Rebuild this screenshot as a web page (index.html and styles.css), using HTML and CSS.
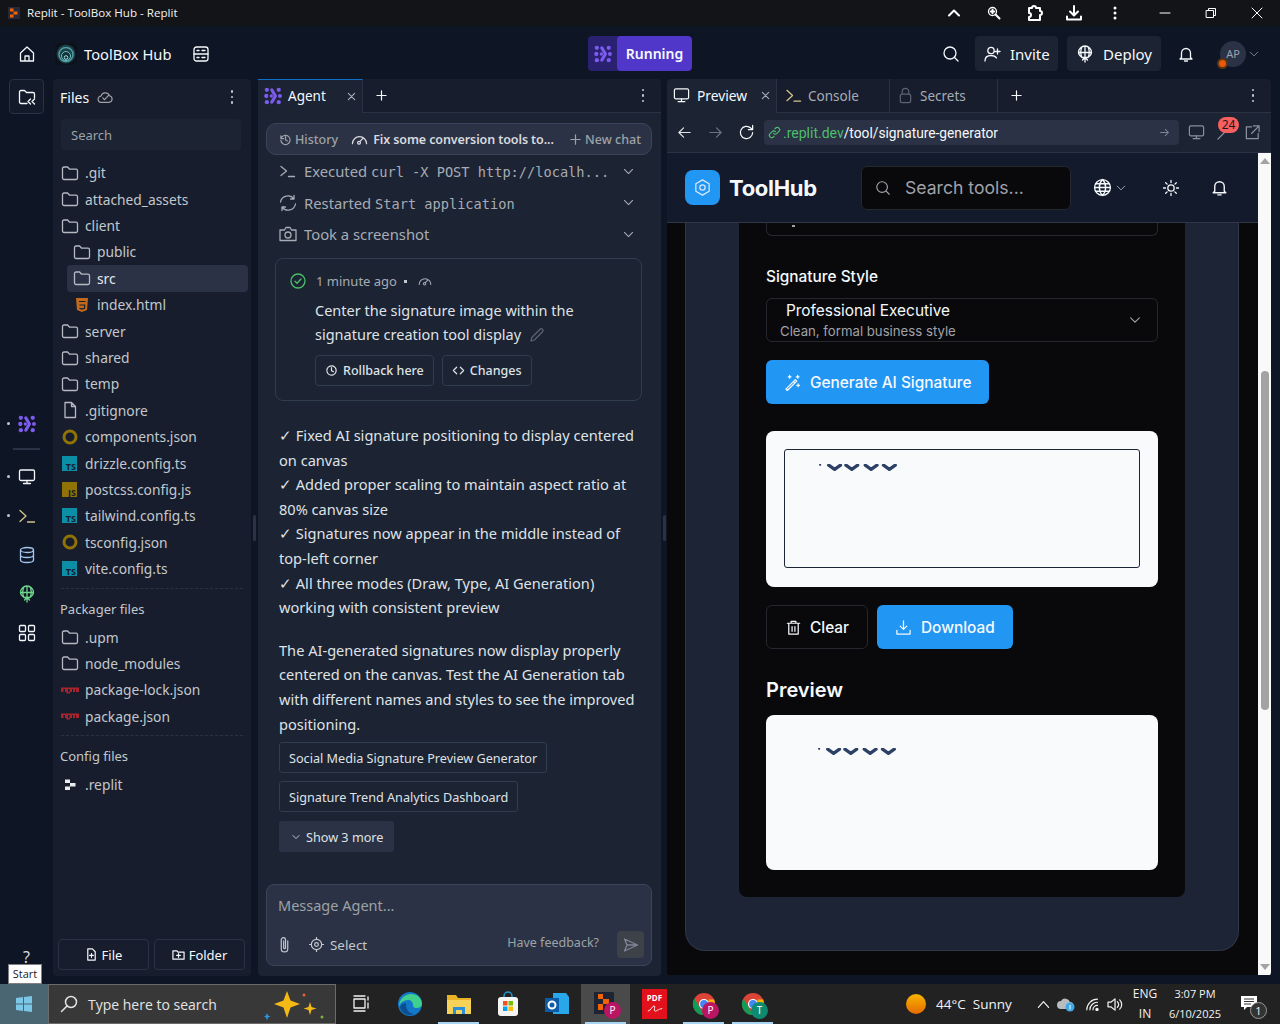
FILE: index.html
```html
<!DOCTYPE html>
<html lang="en">
<head>
    <meta charset="UTF-8">
    <meta name="viewport" content="width=device-width, initial-scale=1.0">
    <title>Replit - ToolBox Hub - Replit</title>
    <link rel="stylesheet" href="styles.css">
</head>
<body>
<svg class="sprite" width="0" height="0">
    <symbol id="i-folder" viewBox="0 0 18 18"><path d="M1.500 4.500a1.500 1.500 0 0 1 1.500-1.500h3.600l2 2.200H15a1.500 1.500 0 0 1 1.500 1.500v7.300a1.500 1.500 0 0 1-1.500 1.500H3a1.500 1.500 0 0 1-1.500-1.500z"/></symbol>
    <symbol id="i-file" viewBox="0 0 18 18"><path d="M4 1.500h6.500L14.500 5.500V16.500H4zM10.500 1.500V5.500H14.500"/></symbol>
    <symbol id="i-chevron" viewBox="0 0 16 16"><path d="M3 5.500l5 5 5-5"/></symbol>
    <symbol id="i-bell" viewBox="0 0 18 18"><path d="M4.500 12.500V8a4.500 4.500 0 0 1 9 0v4.500l1.500 1.500H3zM7.500 16h3"/></symbol>
    <symbol id="i-search" viewBox="0 0 18 18"><circle cx="8" cy="8" r="6"/><path d="M12.500 12.500L16 16"/></symbol>
    <symbol id="i-monitor" viewBox="0 0 18 18"><rect x="1.500" y="2" width="15" height="10.500" rx="1.500"/><path d="M9 12.500v3M5.500 15.500h7"/></symbol>
    <symbol id="i-shell" viewBox="0 0 18 18"><path d="M2 3.500L8 9l-6 5.500"/><path class="dim" d="M9.500 15h7"/></symbol>
    <symbol id="i-gauge" viewBox="0 0 18 18"><path d="M1.500 13.500a7.500 7.500 0 0 1 15 0M9.500 11l3-3"/><circle cx="8.500" cy="12.500" r="1.500"/></symbol>
    <symbol id="i-deploy" viewBox="0 0 18 18"><path d="M2.500 7.500a6.500 6.500 0 0 1 13 0c0 2-1.500 3.500-3.500 5H6c-2-1.500-3.500-3-3.500-5zM2.500 7.500h13M9 1v16M6.500 15L9 12.500 11.500 15M6 1.800c-1.500 3-1.500 7.500 0 10.700M12 1.800c1.500 3 1.500 7.500 0 10.700"/></symbol>
    <symbol id="i-agent" viewBox="0 0 22 22">
        <circle cx="3.500" cy="3.500" r="2.600"/><circle cx="2.800" cy="11" r="2.600"/><circle cx="3.500" cy="18.500" r="2.600"/>
        <circle cx="9" cy="11" r="2"/>
        <path fill="none" stroke="#7c5cf0" stroke-width="3.800" stroke-linecap="round" stroke-linejoin="round" d="M9.500 3.500l4.500 7.500-4.500 7.500"/>
        <circle cx="18" cy="3.500" r="2.600"/><circle cx="19.500" cy="11" r="2.400"/><circle cx="18" cy="18.500" r="2.600"/>
    </symbol>
</svg>

<header class="titlebar">
    <svg class="title-logo" viewBox="0 0 12 12"><rect width="12" height="12" fill="#26293a"/><path fill="#f26207" d="M2 1.500h3.500v3H2zM5.500 4.500h4v3h-4zM2 7.500h3.500v3H2z"/></svg>
    <span class="title-text">Replit - ToolBox Hub - Replit</span>
    <div class="title-actions">
        <svg class="ico title-ico" viewBox="0 0 16 16"><path class="thick" d="M3 10.500l5-5 5 5"/></svg>
        <svg class="ico title-ico" viewBox="0 0 16 16"><circle cx="6.500" cy="6.500" r="4"/><path class="thick" d="M9.500 9.500l4 4M4.800 6.500h3.400M6.500 4.800v3.400"/></svg>
        <svg class="ico title-ico large ext-ico" viewBox="0 0 18 18"><path class="thick" d="M3 4h3a2 2 0 0 1 4 0h4v3a2 2 0 0 1 0 4v5H3v-3a2 2 0 0 0 0-4z"/></svg>
        <svg class="ico title-ico large" viewBox="0 0 18 18"><path class="thick" d="M9 2v9M5 7.500L9 11.500l4-4M2 12.500v3h14v-3"/></svg>
        <svg class="title-ico" viewBox="0 0 16 16"><g fill="#fff"><circle cx="8" cy="3" r="1.500"/><circle cx="8" cy="8" r="1.500"/><circle cx="8" cy="13" r="1.500"/></g></svg>
        <div class="win-btns">
            <svg class="ico win-ico" viewBox="0 0 12 12"><path d="M1 6h10"/></svg>
            <svg class="ico win-ico" viewBox="0 0 12 12"><path d="M1.500 3.500h7v7h-7zM3.500 3.500v-2h7v7h-2"/></svg>
            <svg class="ico win-ico" viewBox="0 0 12 12"><path d="M1 1l10 10M11 1L1 11"/></svg>
        </div>
    </div>
</header>

<nav class="appbar">
    <div class="appbar-left">
        <svg class="ico bar-ico home" viewBox="0 0 18 18"><path d="M2.500 8L9 2l6.500 6v8h-13zM7 16v-5h4v5"/></svg>
        <span class="repl-logo"><svg viewBox="0 0 22 22"><circle cx="11" cy="11" r="9.500" fill="#1c3f47"/><circle cx="11" cy="11.500" r="7" fill="none" stroke="#4f9ea3" stroke-width="1.500"/><circle cx="11" cy="13" r="4.500" fill="#123239" stroke="#6fc0c4"/><circle cx="11" cy="14.500" r="1.800" fill="none" stroke="#a5dcdc"/></svg></span>
        <span class="repl-name">ToolBox Hub</span>
        <svg class="ico bar-ico db-small" viewBox="0 0 18 18"><rect x="2" y="2" width="14" height="14" rx="2.500"/><path d="M2 9h14M5 5.500h2M5 12.500h2M10 5.500h3M10 12.500h3"/></svg>
    </div>
    <div class="run-group">
        <span class="run-logo"><svg class="agent-svg" width="18" height="18"><use href="#i-agent"/></svg></span>
        <span class="run-btn">Running</span>
    </div>
    <div class="appbar-right">
        <svg class="ico bar-ico" viewBox="0 0 18 18"><use href="#i-search"/></svg>
        <span class="bar-btn invite"><svg class="ico bar-ico" viewBox="0 0 18 18"><circle cx="7" cy="5.500" r="3.200"/><path d="M1 16c0-4 2.500-5.500 6-5.500s4.500 1 5.500 2.500M13.500 4v5M11 6.500h5"/></svg>Invite</span>
        <span class="bar-btn deploy"><svg class="ico bar-ico" viewBox="0 0 18 18"><use href="#i-deploy"/></svg>Deploy</span>
        <svg class="ico bar-ico bell" viewBox="0 0 18 18"><use href="#i-bell"/></svg>
        <span class="avatar">AP<span class="avatar-dot"></span></span>
        <svg class="ico avatar-chevron" viewBox="0 0 16 16"><use href="#i-chevron"/></svg>
    </div>
</nav>

<main class="workspace">
    <aside class="rail">
        <span class="rail-toggle">
            <svg class="ico bar-ico" viewBox="0 0 18 18"><path d="M9 15.500H3a1.500 1.500 0 0 1-1.500-1.500V4A1.500 1.500 0 0 1 3 2.500h3.500l2 2H15A1.500 1.500 0 0 1 16.500 6v4M12.500 11l-2.500 2.500 2.500 2.500M16.500 11L14 13.500l2.500 2.500"/></svg>
        </span>
        <div class="rail-tools">
            <span class="rail-item has-dot"><svg class="agent-svg" width="18" height="18"><use href="#i-agent"/></svg></span>
            <span class="rail-sep"></span>
            <span class="rail-item has-dot"><svg class="ico bar-ico" viewBox="0 0 18 18"><use href="#i-monitor"/></svg></span>
            <span class="rail-item has-dot"><svg class="ico bar-ico shell-ico" viewBox="0 0 18 18"><use href="#i-shell"/></svg></span>
            <span class="rail-item"><svg class="ico bar-ico db-ico" viewBox="0 0 18 18"><ellipse cx="9" cy="4" rx="6.500" ry="2.500"/><path d="M2.500 4v10c0 1.400 3 2.500 6.500 2.500s6.500-1.100 6.500-2.500V4M2.500 9c0 1.400 3 2.500 6.500 2.500s6.500-1.100 6.500-2.500"/></svg></span>
            <span class="rail-item"><svg class="ico bar-ico deploy-ico" viewBox="0 0 18 18"><use href="#i-deploy"/></svg></span>
            <span class="rail-item"><svg class="ico bar-ico" viewBox="0 0 18 18"><rect x="1.500" y="1.500" width="6" height="6" rx="1"/><rect x="10.500" y="1.500" width="6" height="6" rx="1"/><rect x="1.500" y="10.500" width="6" height="6" rx="1"/><rect x="10.500" y="10.500" width="6" height="6" rx="1"/></svg></span>
        </div>
        <span class="rail-help">?</span>
    </aside>

    <section class="files-panel">
        <div class="files-head">
            <span class="files-title">Files</span>
            <svg class="ico cloud" viewBox="0 0 18 14"><path d="M5 12.500a3.500 3.500 0 0 1-.5-7A5 5 0 0 1 14 5a3.800 3.800 0 0 1-.5 7.500zM6.500 7.500l2 2L13 4.500"/></svg>
            <span class="kebab"><i></i><i></i><i></i></span>
        </div>
        <div class="files-search">Search</div>
        <ul class="tree">
            <li class="row"><svg class="ico ftype"><use href="#i-folder"/></svg>.git</li>
            <li class="row"><svg class="ico ftype"><use href="#i-folder"/></svg>attached_assets</li>
            <li class="row"><svg class="ico ftype"><use href="#i-folder"/></svg>client</li>
            <li class="row nested"><svg class="ico ftype"><use href="#i-folder"/></svg>public</li>
            <li class="row nested selected"><svg class="ico ftype"><use href="#i-folder"/></svg>src</li>
            <li class="row nested"><svg class="ftype" viewBox="0 0 18 18"><path fill="#c26a1c" d="M3 2h12l-1 12-5 2-5-2z"/><path d="M6 5.500h6.500M6.400 9h5.800M11.800 9l-.3 3.200-2.500.8-2.500-.8" fill="none" stroke="#171d2d" stroke-width="1.200"/></svg>index.html</li>
            <li class="row"><svg class="ico ftype"><use href="#i-folder"/></svg>server</li>
            <li class="row"><svg class="ico ftype"><use href="#i-folder"/></svg>shared</li>
            <li class="row"><svg class="ico ftype"><use href="#i-folder"/></svg>temp</li>
            <li class="row"><svg class="ico ftype"><use href="#i-file"/></svg>.gitignore</li>
            <li class="row"><svg class="ftype" viewBox="0 0 18 18"><circle cx="9" cy="9" r="6" fill="none" stroke="#8f7306" stroke-width="3"/><path d="M6 11c3 1 5-1 5-5" fill="none" stroke="#171d2d" stroke-width="1.500"/></svg>components.json</li>
            <li class="row"><span class="badge ts">TS</span>drizzle.config.ts</li>
            <li class="row"><span class="badge js">JS</span>postcss.config.js</li>
            <li class="row"><span class="badge ts">TS</span>tailwind.config.ts</li>
            <li class="row"><svg class="ftype" viewBox="0 0 18 18"><circle cx="9" cy="9" r="6" fill="none" stroke="#8f7306" stroke-width="3"/><path d="M6 11c3 1 5-1 5-5" fill="none" stroke="#171d2d" stroke-width="1.500"/></svg>tsconfig.json</li>
            <li class="row"><span class="badge ts">TS</span>vite.config.ts</li>
        </ul>
        <div class="tree-sep"></div>
        <div class="tree-label">Packager files</div>
        <ul class="tree">
            <li class="row"><svg class="ico ftype"><use href="#i-folder"/></svg>.upm</li>
            <li class="row"><svg class="ico ftype"><use href="#i-folder"/></svg>node_modules</li>
            <li class="row"><svg class="ftype" viewBox="0 0 18 18"><path fill="#a8232b" d="M0 6.500h18v4.500H9v1.500H5.500V11H0z"/><path fill="#171d2d" d="M2.500 8H4v3H2.500zM7 8h1.500v3H7zM11 8h1v3h-1zM14 8h1v3h-1z"/></svg>package-lock.json</li>
            <li class="row"><svg class="ftype" viewBox="0 0 18 18"><path fill="#a8232b" d="M0 6.500h18v4.500H9v1.500H5.500V11H0z"/><path fill="#171d2d" d="M2.500 8H4v3H2.500zM7 8h1.500v3H7zM11 8h1v3h-1zM14 8h1v3h-1z"/></svg>package.json</li>
        </ul>
        <div class="tree-sep config-sep"></div>
        <div class="tree-label">Config files</div>
        <ul class="tree">
            <li class="row"><svg class="ftype" viewBox="0 0 18 18"><path fill="#e9edf0" d="M4 3.500h5v3.500H4zM9 7h5.500v3.500H9zM4 10.500h5V14H4z"/></svg>.replit</li>
        </ul>
        <div class="files-actions">
            <span class="files-btn"><svg class="ico btn-ico" viewBox="0 0 14 14"><path d="M3 1h5l3 3v9H3zM7 6v4M5 8h4"/></svg>File</span>
            <span class="files-btn"><svg class="ico btn-ico" viewBox="0 0 14 14"><path d="M1 3h4l1.500 1.500H13V12H1zM7 6v4M5 8h4"/></svg>Folder</span>
        </div>
    </section>

    <div class="gutter"><span></span></div>

    <section class="agent-panel">
        <div class="tabs">
            <span class="tab agent-tab"><svg class="agent-svg" width="18" height="18"><use href="#i-agent"/></svg>Agent<svg class="ico tab-x" viewBox="0 0 10 10"><path d="M1.500 1.500l7 7M8.500 1.500l-7 7"/></svg></span>
            <svg class="ico tab-plus" viewBox="0 0 12 12"><path d="M6 1v10M1 6h10"/></svg>
            <span class="kebab"><i></i><i></i><i></i></span>
        </div>
        <div class="agent-scroll">
            <div class="chat-pill">
                <span class="pill-item"><svg class="ico pill-ico" viewBox="0 0 14 14"><path d="M2 3v3h3M2.200 6A5 5 0 1 1 2 8M7 4v3.200l2 1.300"/></svg>History</span>
                <span class="pill-current"><svg class="ico gauge" viewBox="0 0 18 18"><use href="#i-gauge"/></svg>Fix some conversion tools to...</span>
                <span class="pill-item"><svg class="ico pill-ico" viewBox="0 0 14 14"><path d="M7 2v10M2 7h10"/></svg>New chat</span>
            </div>
            <div class="step"><svg class="ico step-ico" viewBox="0 0 18 18"><path d="M2 4.500L7.500 9 2 13.500"/><path d="M9.500 14.500h6"/></svg><span class="step-text">Executed <code>curl -X POST http://localh...</code></span><svg class="ico step-chevron" viewBox="0 0 16 16"><use href="#i-chevron"/></svg></div>
            <div class="step"><svg class="ico step-ico" viewBox="0 0 18 18"><path d="M1.500 8A7.500 7.500 0 0 1 15 5M15 1.500V5h-3.500M16.500 10A7.500 7.500 0 0 1 3 13M3 16.500V13h3.500"/></svg><span class="step-text">Restarted <code>Start application</code></span><svg class="ico step-chevron" viewBox="0 0 16 16"><use href="#i-chevron"/></svg></div>
            <div class="step"><svg class="ico step-ico" viewBox="0 0 18 18"><path d="M1 5h4.500l1.500-2.500h4L12.500 5H17v10.500H1z"/><circle cx="9" cy="10" r="3"/></svg><span class="step-text">Took a screenshot</span><svg class="ico step-chevron" viewBox="0 0 16 16"><use href="#i-chevron"/></svg></div>
            <div class="checkpoint">
                <div class="cp-meta">
                    <svg class="ico cp-check" viewBox="0 0 16 16"><circle cx="8" cy="8" r="7"/><path d="M5 8.300l2 2 4-4.300"/></svg>
                    <span>1 minute ago</span><i class="cp-bullet"></i>
                    <svg class="ico cp-gauge" viewBox="0 0 18 18"><use href="#i-gauge"/></svg>
                </div>
                <p class="cp-text">Center the signature image within the signature creation tool display<svg class="ico cp-pen" viewBox="0 0 16 16"><path d="M2 14l.8-3.500L11 2.300a1.500 1.500 0 0 1 2.500 2.500L5.300 13z"/></svg></p>
                <div class="cp-actions">
                    <span class="cp-btn"><svg class="ico cp-btn-ico" viewBox="0 0 14 14"><circle cx="7" cy="7" r="5" stroke-dasharray="3 1"/><path d="M7 4v3.200l2 1"/></svg>Rollback here</span>
                    <span class="cp-btn"><svg class="ico cp-btn-ico" viewBox="0 0 14 14"><path d="M5 3.500L1.500 7 5 10.500M9 3.500L12.500 7 9 10.500"/></svg>Changes</span>
                </div>
            </div>
            <div class="agent-msg">
                <p>✓ Fixed AI signature positioning to display centered on canvas<br>✓ Added proper scaling to maintain aspect ratio at 80% canvas size<br>✓ Signatures now appear in the middle instead of top-left corner<br>✓ All three modes (Draw, Type, AI Generation) working with consistent preview</p>
                <p>The AI-generated signatures now display properly centered on the canvas. Test the AI Generation tab with different names and styles to see the improved positioning.</p>
            </div>
            <div class="suggestions">
                <span class="suggest">Social Media Signature Preview Generator</span>
                <span class="suggest">Signature Trend Analytics Dashboard</span>
                <span class="suggest more"><svg class="ico more-chevron" viewBox="0 0 16 16"><use href="#i-chevron"/></svg>Show 3 more</span>
            </div>
        </div>
        <div class="composer">
            <div class="composer-hint">Message Agent...</div>
            <div class="composer-foot">
                <svg class="ico clip" viewBox="0 0 14 18"><path d="M10.500 5v8.500a3.500 3.500 0 0 1-7 0V4a2.300 2.300 0 0 1 4.600 0v8.500a1 1 0 0 1-2 0V5"/></svg>
                <span class="composer-select"><svg class="ico sel-ico" viewBox="0 0 16 16"><circle cx="8" cy="8" r="5.500"/><circle cx="8" cy="8" r="2"/><path d="M8 .5v2M8 13.500v2M.5 8h2M13.500 8h2"/></svg>Select</span>
                <span class="feedback">Have feedback?</span>
                <span class="send"><svg class="ico" viewBox="0 0 16 16"><path d="M1.500 2l13 6-13 6 2.500-6zM4 8h10"/></svg></span>
            </div>
        </div>
    </section>

    <div class="gutter gutter-narrow"><span></span></div>

    <section class="preview-panel">
        <div class="tabs preview-tabs">
            <span class="tab ptab-preview"><svg class="ico tab-ico" viewBox="0 0 18 18"><use href="#i-monitor"/></svg>Preview<svg class="ico tab-x" viewBox="0 0 10 10"><path d="M1.500 1.500l7 7M8.500 1.500l-7 7"/></svg></span>
            <span class="tab off ptab-console"><svg class="ico tab-ico shell-ico" viewBox="0 0 18 18"><use href="#i-shell"/></svg>Console</span>
            <span class="tab off ptab-secrets"><svg class="ico tab-ico dim-ico" viewBox="0 0 18 18"><rect x="3.500" y="7.500" width="11" height="9" rx="2"/><path d="M5.500 7.500V5a3.500 3.500 0 0 1 7 0v2.500"/></svg>Secrets</span>
            <svg class="ico tab-plus" viewBox="0 0 12 12"><path d="M6 1v10M1 6h10"/></svg>
            <span class="kebab"><i></i><i></i><i></i></span>
        </div>
        <div class="browser-bar">
            <svg class="ico nav-ico" viewBox="0 0 16 16"><path d="M14 8H2M7 3L2 8l5 5"/></svg>
            <svg class="ico nav-ico nav-off" viewBox="0 0 16 16"><path d="M2 8h12M9 3l5 5-5 5"/></svg>
            <svg class="ico nav-ico reload" viewBox="0 0 18 18"><path d="M15.500 9A6.500 6.500 0 1 1 13.500 4.300L15.500 6M15.500 1.500V6H11"/></svg>
            <div class="url">
                <svg class="ico url-link" viewBox="0 0 14 14"><path d="M6 8a2.500 2.500 0 0 0 3.500 0l2.500-2.500A2.500 2.500 0 0 0 8.500 2L7.500 3M8 6a2.500 2.500 0 0 0-3.500 0L2 8.500A2.500 2.500 0 0 0 5.500 12l1-1"/></svg>
                <span class="url-host">.replit.dev</span><span class="url-path">/tool/signature-generator</span>
                <svg class="ico url-go" viewBox="0 0 14 14"><path d="M2 7h10M8 3l4 4-4 4"/></svg>
            </div>
            <svg class="ico tool-ico" viewBox="0 0 18 18"><use href="#i-monitor"/></svg>
            <span class="devtools">
                <svg class="ico tool-ico" viewBox="0 0 18 18"><path d="M2 16l8-8M9 4a4 4 0 1 1 5 5l-3-1-1-1z"/></svg>
                <span class="count">24</span>
            </span>
            <svg class="ico tool-ico" viewBox="0 0 18 18"><path d="M8 3H2.500v12.500H15V10M10 2h6v6M16 2L8 10"/></svg>
        </div>
        <div class="viewport">
            <div class="page">
                <header class="hub-head">
                    <span class="hub-logo"><svg class="ico" viewBox="0 0 20 20"><path d="M10 2l7 4v8l-7 4-7-4V6z"/><circle cx="10" cy="10" r="2.800"/></svg></span>
                    <span class="hub-name">ToolHub</span>
                    <div class="hub-search"><svg class="ico hub-search-ico" viewBox="0 0 18 18"><use href="#i-search"/></svg>Search tools...</div>
                    <svg class="ico hub-globe" viewBox="0 0 18 18"><circle cx="9" cy="9" r="7.500"/><path d="M1.500 9h15M2.500 5.500h13M2.500 12.500h13M9 1.500c-4 4-4 11 0 15M9 1.500c4 4 4 11 0 15"/></svg>
                    <svg class="ico hub-globe-chevron" viewBox="0 0 16 16"><use href="#i-chevron"/></svg>
                    <svg class="ico hub-sun" viewBox="0 0 18 18"><circle cx="9" cy="9" r="3.200"/><path d="M9 1.500v2M9 14.500v2M1.500 9h2M14.500 9h2M3.700 3.700l1.400 1.400M12.900 12.900l1.400 1.400M3.700 14.300l1.400-1.400M12.900 5.100l1.400-1.400"/></svg>
                    <svg class="ico hub-bell" viewBox="0 0 18 18"><use href="#i-bell"/></svg>
                </header>
                <div class="hub-body">
                    <div class="outer-card">
                        <div class="inner-card">
                            <div class="cut-input"><i></i></div>
                            <label class="field-label">Signature Style</label>
                            <div class="style-select">
                                <div>
                                    <div class="style-name">Professional Executive</div>
                                    <div class="style-desc">Clean, formal business style</div>
                                </div>
                                <svg class="ico style-chevron" viewBox="0 0 16 16"><use href="#i-chevron"/></svg>
                            </div>
                            <span class="blue-btn generate"><svg class="ico blue-ico" viewBox="0 0 18 18"><path d="M2 16L12 6l1.500 1.500-10 10zM10 8l1.500 1.500M6 1.500v3M4.500 3h3M14.500 1.500v3M13 3h3M15 10.500v3M13.500 12h3"/></svg>Generate AI Signature</span>
                            <div class="sig-card">
                                <div class="sig-canvas">
                                    <svg class="sig-ink" viewBox="0 0 80 8"><circle cx="1" cy="0.800" r="1" fill="#2d4066" stroke="none"/><path d="M9 1l5.500 4L20 1M25 1l5.500 4L36 1M43 1l5.500 4L54 1M60 1l5.500 4L71 1"/></svg>
                                </div>
                            </div>
                            <div class="sig-actions">
                                <span class="ghost-btn"><svg class="ico blue-ico" viewBox="0 0 18 18"><path d="M2.500 4.500h13M6.500 4.500V2.500h5v2M4 4.500V16h10V4.500M7.500 8v5M10.500 8v5"/></svg>Clear</span>
                                <span class="blue-btn"><svg class="ico blue-ico" viewBox="0 0 18 18"><path d="M9 2v9M5.500 7.500L9 11l3.500-3.500M2 12v4h14v-4"/></svg>Download</span>
                            </div>
                            <h3 class="preview-title">Preview</h3>
                            <div class="preview-box">
                                <svg class="sig-ink" viewBox="0 0 80 8"><circle cx="1" cy="0.800" r="1" fill="#2d4066" stroke="none"/><path d="M9 1l5.500 4L20 1M25 1l5.500 4L36 1M43 1l5.500 4L54 1M60 1l5.500 4L71 1"/></svg>
                            </div>
                        </div>
                    </div>
                </div>
            </div>
            <div class="scrollbar">
                <span class="arrow-up"></span>
                <span class="thumb"></span>
                <span class="arrow-down"></span>
            </div>
        </div>
    </section>
</main>

<footer class="taskbar">
    <span class="start"><svg viewBox="0 0 18 18" width="18" height="18"><path fill="#7cc6e6" d="M1 3l7-1v6.500H1zM9 1.900L17 1v7.500H9zM1 9.500h7V16l-7-1zM9 9.500h8V17l-8-1z"/></svg></span>
    <div class="tb-search">
        <svg class="ico tb-search-ico" viewBox="0 0 18 18"><circle cx="11" cy="7" r="5.500"/><path d="M7 11l-5.500 5.500"/></svg>
        <span>Type here to search</span>
        <svg class="tb-spark" viewBox="0 0 70 32"><path fill="#f5b916" d="M25 2l3.500 9.500L38 15l-9.500 3.500L25 29l-3.500-10.500L12 15l9.500-3.500z"/><path fill="#f5b916" d="M48 13l1.500 5 5 1.500-5 1.500L48 26l-1.500-5-5-1.500 5-1.500z"/><path fill="#2a95e8" d="M5 24l1 2.500 2.500 1-2.500 1-1 3-1-3-2-1 2-1z"/><circle cx="42" cy="6" r="1.500" fill="#e8642c"/><circle cx="60" cy="28" r="1.500" fill="#7fb23a"/></svg>
    </div>
    <span class="tb-app"><svg class="ico tb-view" viewBox="0 0 20 20"><path d="M3 5h11v9H3zM3 2h11M3 17h11M17 3v3M17 9v5"/></svg></span>
    <span class="tb-app"><svg viewBox="0 0 26 26" width="26" height="26"><circle cx="13" cy="13" r="12" fill="#1478c8"/><path fill="#3fd08f" d="M2 16C2 8 8 3 14 3c7 0 11 5 11 10 0 3-3 4-6 4-2 0-3-1-3-3 0-3-2-5-5-5-5 0-9 4-9 7z"/><path fill="#0b4f8f" d="M9 14c0 5 4 9 8 9-6 3-13-1-14-7 1-2 3-4 6-4z"/></svg></span>
    <span class="tb-app running"><svg viewBox="0 0 26 26" width="26" height="26"><path fill="#e8b226" d="M1 4h9l2 3h13v16H1z"/><path fill="#f7d258" d="M1 9h24v14H1z"/><path fill="#2a8fd6" d="M7 23v-7h12v7h-3v-4h-6v4z"/></svg></span>
    <span class="tb-app"><svg viewBox="0 0 26 26" width="26" height="26"><path fill="none" stroke="#1e9bd6" stroke-width="1.500" d="M9 7V5a4 4 0 0 1 8 0v2"/><rect x="3" y="6" width="20" height="19" rx="3" fill="#f4f4f4"/><path fill="#f25022" d="M8 10h4.500v4.500H8z"/><path fill="#7fba00" d="M13.500 10H18v4.500h-4.500z"/><path fill="#00a4ef" d="M8 15.500h4.500V20H8z"/><path fill="#ffb900" d="M13.500 15.500H18V20h-4.500z"/></svg></span>
    <span class="tb-app"><svg viewBox="0 0 26 26" width="26" height="26"><path fill="#28a8ea" d="M9 2h13l3 4v17H9z"/><path fill="#0a5ca8" d="M1 7h14v14H1z"/><circle cx="8" cy="14" r="3.500" fill="none" stroke="#fff" stroke-width="2"/></svg></span>
    <span class="tb-app active"><svg viewBox="0 0 26 26" width="26" height="26"><rect x="1" y="1" width="20" height="22" fill="#1d2433"/><path fill="#f26207" d="M5 3h5v5H5zM10 8h6v5h-6zM5 13h5v6H5z"/></svg><span class="tb-profile pink">P</span></span>
    <span class="tb-app"><span class="pdf">PDF<svg class="pdf-sign" viewBox="0 0 20 10"><path d="M2 8c4-1 5-6 7-6s-1 6 1 6 3-2 8-3"/></svg></span></span>
    <span class="tb-app running"><svg class="chrome" viewBox="0 0 26 26" width="24" height="24"><circle cx="13" cy="13" r="12" fill="#db4437"/><path fill="#0f9d58" d="M13 25A12 12 0 0 1 2.600 7L8 16z"/><path fill="#f4b400" d="M25 13a12 12 0 0 1-12 12l5-9V8h6z"/><circle cx="13" cy="13" r="5.500" fill="#fff"/><circle cx="13" cy="13" r="4.200" fill="#4285f4"/></svg><span class="tb-profile pink">P</span></span>
    <span class="tb-app running"><svg class="chrome" viewBox="0 0 26 26" width="24" height="24"><circle cx="13" cy="13" r="12" fill="#db4437"/><path fill="#0f9d58" d="M13 25A12 12 0 0 1 2.600 7L8 16z"/><path fill="#f4b400" d="M25 13a12 12 0 0 1-12 12l5-9V8h6z"/><circle cx="13" cy="13" r="5.500" fill="#fff"/><circle cx="13" cy="13" r="4.200" fill="#4285f4"/></svg><span class="tb-profile teal">T</span></span>
    <div class="tray">
        <span class="sun"></span>
        <span class="weather">44°C&nbsp; Sunny</span>
        <svg class="ico tray-chev" viewBox="0 0 14 14"><path d="M1.500 10L7 4l5.500 6"/></svg>
        <svg class="tray-cloud" viewBox="0 0 18 16"><path fill="#b9bcc0" d="M4 13a4 4 0 0 1 0-8 5 5 0 0 1 9 1 3.500 3.500 0 0 1 0 7z"/><circle cx="13" cy="11" r="4.500" fill="#3fa9e8"/><path stroke="#fff" d="M13 9v4.500"/></svg>
        <svg class="ico tray-wifi" viewBox="0 0 18 16"><path d="M2 14A12 12 0 0 1 14 2M5.500 14A8.500 8.500 0 0 1 14 5.500M9 14a5 5 0 0 1 5-5"/><circle cx="13.500" cy="13.500" r="1.300" fill="#fff"/></svg>
        <svg class="ico tray-vol" viewBox="0 0 18 16"><path d="M1 5.500h3L8.500 2v12L4 10.500H1zM11 5a4 4 0 0 1 0 6M13.500 3a7 7 0 0 1 0 10"/></svg>
        <div class="lang"><span>ENG</span><span>IN</span></div>
        <div class="clock"><span>3:07 PM</span><span>6/10/2025</span></div>
        <span class="notif">
            <svg viewBox="0 0 18 16" width="18" height="16"><path fill="#fff" d="M1 1h16v11H7l-3 3v-3H1z"/><path stroke="#333" d="M4 4h10M4 6.500h10M4 9h7"/></svg>
            <span class="notif-count">1</span>
        </span>
    </div>
</footer>

<span class="start-tip">Start</span>
</body>
</html>
```

FILE: styles.css
```css
* {
    box-sizing: border-box;
}

html, body {
    margin: 0;
    height: 100%;
}

body {
    width: 1280px;
    height: 1024px;
    overflow: hidden;
    display: flex;
    flex-direction: column;
    background-color: #0e1525;
    color: #f5f9fc;
    font-family: 'Noto Sans', sans-serif;
    font-size: 14px;
    position: relative;
}

ul {
    list-style: none;
    margin: 0;
    padding: 0;
}

p {
    margin: 0;
}

.sprite {
    position: absolute;
}

/* icons are all outlined by default */
.ico {
    fill: none;
    stroke: currentColor;
    stroke-width: 1.3;
    stroke-linecap: round;
    stroke-linejoin: round;
    flex: none;
}

.ico .thick {
    stroke-width: 2;
}

.agent-svg {
    fill: #7c5cf0;
    flex: none;
}

.bar-ico {
    width: 18px;
    height: 18px;
}

/* window title */
.titlebar {
    height: 26px;
    flex: none;
    display: flex;
    align-items: center;
    background-color: #131417;
    padding-left: 8px;
    font-size: 11.600px;
}

.title-logo {
    width: 12px;
    height: 12px;
    margin-right: 7px;
}

.title-text {
    font-family: 'Open Sans', sans-serif;
    color: #f2f2f2;
    width: 150px;
    white-space: nowrap;
    margin-top: -1px;
}

.title-actions {
    margin-left: auto;
    display: flex;
    align-items: center;
    gap: 24px;
    color: #fff;
}

.title-ico {
    width: 16px;
    height: 16px;
}

.title-ico.large {
    width: 18px;
    height: 18px;
}

.ext-ico {
    margin-right: -3px;
}

.win-btns {
    display: flex;
    align-items: center;
    gap: 34px;
    margin: 0 17px 0 12px;
}

.win-ico {
    width: 12px;
    height: 12px;
    stroke-width: 1;
}

/* top app bar */
.appbar {
    height: 53px;
    flex: none;
    display: grid;
    grid-template-columns: 1fr auto 1fr;
    align-items: center;
    padding: 2px 0 0;
}

.appbar-left {
    display: flex;
    align-items: center;
    padding-left: 18px;
}

.home {
    margin-right: 19px;
}

.repl-logo {
    width: 22px;
    height: 22px;
    border-radius: 5px;
    background-color: #0d1119;
    margin-right: 7px;
}

.repl-logo svg {
    display: block;
}

.repl-name {
    font-size: 14.700px;
    width: 87px;
    white-space: nowrap;
    margin-right: 21px;
}

.run-group {
    display: flex;
    height: 35px;
    width: 104px;
    border-radius: 4px;
    overflow: hidden;
    background-color: #2a2170;
}

.run-logo {
    width: 29px;
    display: flex;
    align-items: center;
    justify-content: center;
}

.run-btn {
    flex: 1;
    background-color: #5036c9;
    border-radius: 4px;
    display: flex;
    align-items: center;
    justify-content: center;
    font-weight: 600;
    font-size: 14px;
}

.appbar-right {
    display: flex;
    align-items: center;
    justify-content: flex-end;
    padding-right: 20px;
}

.bar-btn {
    height: 35px;
    display: flex;
    align-items: center;
    gap: 8px;
    border-radius: 4px;
    background-color: #1c2333;
    padding: 0 9px;
    font-size: 15px;
}

.invite {
    width: 83px;
    margin: 0 9px 0 15px;
}

.deploy {
    width: 94px;
    margin-right: 16px;
    gap: 9px;
}

.bell {
    margin-right: 25px;
}

.avatar {
    width: 26px;
    height: 26px;
    border-radius: 50%;
    background-color: #2b3245;
    color: #9da2b0;
    font-size: 11px;
    display: flex;
    align-items: center;
    justify-content: center;
    position: relative;
}

.avatar-dot {
    position: absolute;
    left: -3px;
    bottom: -2px;
    width: 11px;
    height: 11px;
    border-radius: 50%;
    background-color: #e8590c;
    border: 2px solid #5b3413;
}

.avatar-chevron {
    width: 12px;
    height: 12px;
    color: #7d8595;
    margin-left: 2px;
}

/* main area */
.workspace {
    height: 897px;
    flex: none;
    display: flex;
}

.rail {
    width: 53px;
    flex: none;
    display: flex;
    flex-direction: column;
    align-items: center;
}

.rail-toggle {
    width: 35px;
    height: 35px;
    border: 1px solid #2b3245;
    border-radius: 4px;
    background-color: #131a2a;
    display: flex;
    align-items: center;
    justify-content: center;
}

.rail-tools {
    margin-top: 290px;
    display: flex;
    flex-direction: column;
    align-items: center;
}

.rail-item {
    height: 39px;
    width: 35px;
    display: flex;
    align-items: center;
    justify-content: center;
    position: relative;
}

.has-dot::before {
    content: "";
    position: absolute;
    left: -2px;
    top: 18px;
    width: 3px;
    height: 3px;
    border-radius: 50%;
    background-color: #c2c8cc;
}

.rail-sep {
    width: 27px;
    height: 2px;
    background-color: #2b3245;
    margin: 5px 0 7px;
}

.shell-ico {
    color: #d4c68a;
}

.shell-ico .dim {
    opacity: 0.7;
}

.db-ico {
    color: #a3c7ee;
}

.deploy-ico {
    color: #6fd58a;
}

.rail-help {
    margin-top: auto;
    margin-bottom: 9px;
    font-size: 16px;
    color: #d8dade;
    line-height: 20px;
}

.files-panel {
    width: 198px;
    flex: none;
    background-color: #171d2d;
    border-radius: 4px;
    display: flex;
    flex-direction: column;
    padding: 0 0 6px;
}

.files-head {
    height: 36px;
    flex: none;
    display: flex;
    align-items: center;
    padding: 0 18px 0 7px;
}

.files-title {
    font-size: 14px;
    margin-right: 8px;
}

.cloud {
    width: 16px;
    height: 13px;
    color: #9da2a6;
}

.kebab {
    margin-left: auto;
    display: flex;
    flex-direction: column;
    gap: 3px;
}

.kebab i {
    width: 2.500px;
    height: 2.500px;
    border-radius: 50%;
    background-color: #c2c8cc;
}

.files-search {
    margin: 4px 10px 0 8px;
    height: 31px;
    flex: none;
    background-color: #1c2333;
    border-radius: 4px;
    padding: 1px 10px 0;
    line-height: 31px;
    font-size: 13px;
    color: #9da2a6;
}

.tree {
    padding: 9.600px 3px 0 8px;
}

.tree + .tree-sep {
    margin-top: 6px;
}

.row {
    height: 26.400px;
    display: flex;
    align-items: center;
    gap: 6px;
    font-size: 13.800px;
    color: #c2c8cc;
    border-radius: 4px;
    white-space: nowrap;
}

.nested {
    padding-left: 12px;
}

.selected {
    background-color: #2b3245;
    color: #e4e8ec;
    margin-left: 6px;
    padding-left: 6px;
}

.ftype {
    width: 18px;
    height: 18px;
    flex: none;
    color: #b5bac2;
}

.badge {
    width: 15px;
    height: 15px;
    margin: 0 2px 0 1px;
    flex: none;
    font-size: 9px;
    font-weight: 700;
    line-height: 9px;
    text-align: right;
    padding: 6px 1px 0 0;
    color: #171d2d;
}

.badge.ts {
    background-color: #0c8ea6;
}

.badge.js {
    background-color: #8f7306;
}

.tree-sep {
    height: 1px;
    flex: none;
    margin: 0 8px;
    border-top: 1px dashed #2b3245;
}

.tree-label {
    margin: 11px 0 0 7px;
    font-size: 13px;
    line-height: 18px;
    color: #c2c8cc;
}

.tree-sep + .tree-label + .tree {
    padding-top: 6px;
}

.config-sep {
    margin-top: 6px;
}

.files-actions {
    margin-top: auto;
    display: flex;
    gap: 5px;
    padding: 0 6px 0 5px;
}

.files-btn {
    flex: 1;
    height: 31px;
    border: 1px solid #2b3245;
    border-radius: 4px;
    display: flex;
    align-items: center;
    justify-content: center;
    gap: 4px;
    font-size: 13px;
}

.btn-ico {
    width: 13px;
    height: 13px;
}

.gutter {
    flex: none;
    width: 7px;
    display: flex;
    align-items: center;
    justify-content: center;
}

.gutter-narrow {
    width: 6px;
}

.gutter span {
    width: 3px;
    height: 26px;
    background-color: #2b3245;
    border-radius: 2px;
}

/* agent column */
.agent-panel {
    width: 403px;
    flex: none;
    background-color: #1c2333;
    border-radius: 4px;
    display: flex;
    flex-direction: column;
    position: relative;
}

.tabs {
    height: 34px;
    flex: none;
    display: flex;
    align-items: center;
    padding-right: 17px;
    background-color: #171d2d;
    border-bottom: 1px solid #2b3245;
    border-radius: 4px 4px 0 0;
}

.tab {
    height: 34px;
    display: flex;
    align-items: center;
    gap: 6px;
    font-size: 13.500px;
    background-color: #1c2333;
    border-right: 1px solid #2b3245;
    white-space: nowrap;
}

.agent-tab {
    width: 105px;
    padding: 0 6px;
    border-top: 1px solid #0f6fc6;
}

.tab-x {
    width: 9px;
    height: 9px;
    color: #a7acb4;
    margin-left: auto;
}

.tab-plus {
    width: 11px;
    height: 11px;
    margin-left: 13px;
}

.agent-scroll {
    flex: 1;
    overflow: hidden;
    padding: 10px 9px 0 8px;
}

.chat-pill {
    height: 32px;
    background-color: #2b3245;
    border: 1px solid #3c445c;
    border-radius: 10px;
    display: flex;
    align-items: center;
    padding: 0 10px 0 12px;
    font-size: 12.500px;
    color: #9da2a6;
    white-space: nowrap;
}

.pill-item {
    display: flex;
    align-items: center;
    gap: 3px;
    font-weight: 500;
}

.pill-ico {
    width: 13px;
    height: 13px;
}

.pill-current {
    display: flex;
    align-items: center;
    gap: 5px;
    margin: 0 auto 0 13px;
    color: #d8dade;
    font-weight: 600;
    letter-spacing: -0.1px;
}

.gauge {
    width: 17px;
    height: 17px;
}

.step {
    height: 31.500px;
    display: flex;
    align-items: center;
    padding: 0 17px 0 13px;
    color: #a7acb4;
    font-size: 14.800px;
}

.chat-pill + .step {
    margin-top: 0.500px;
}

.step-ico {
    width: 18px;
    height: 18px;
    margin-right: 7px;
}

.step-text {
    flex: 1;
    white-space: nowrap;
}

.step-text code {
    font-family: 'DejaVu Sans Mono', monospace;
    font-size: 13.650px;
}

.step-chevron {
    width: 13px;
    height: 13px;
}

.checkpoint {
    margin: 8px 10px 0 9px;
    height: 143px;
    border: 1px solid #2f3d4f;
    border-radius: 8px;
    padding: 13px 15px 0 14px;
}

.cp-meta {
    display: flex;
    align-items: center;
    font-size: 13px;
    color: #a7acb4;
    line-height: 18px;
}

.cp-check {
    width: 16px;
    height: 16px;
    color: #4cbf6b;
    margin-right: 10px;
}

.cp-bullet {
    width: 3px;
    height: 3px;
    background-color: #c2c8cc;
    margin: 0 10px 0 7px;
}

.cp-gauge {
    width: 16px;
    height: 14px;
}

.cp-text {
    margin: 8px 0 0 25px;
    font-size: 14.500px;
    line-height: 24px;
    color: #dfe2e6;
}

.cp-pen {
    width: 16px;
    height: 16px;
    margin-left: 8px;
    color: #5c6270;
    vertical-align: -3px;
}

.cp-actions {
    display: flex;
    gap: 8px;
    margin: 9px 0 0 25px;
}

.cp-btn {
    height: 31px;
    display: flex;
    align-items: center;
    gap: 5px;
    padding: 0 9px;
    border: 1px solid #2f3d4f;
    border-radius: 4px;
    font-size: 12.500px;
    font-weight: 500;
    color: #dfe2e6;
    white-space: nowrap;
}

.cp-btn-ico {
    width: 13px;
    height: 13px;
}

.agent-msg {
    padding: 22px 14px 0 13px;
    font-size: 14.600px;
    line-height: 24.600px;
    color: #dfe2e6;
}

.agent-msg p + p {
    margin-top: 18px;
}

.suggestions {
    margin: 6px 0 0 13px;
    display: flex;
    flex-direction: column;
    align-items: flex-start;
    gap: 8px;
}

.suggest {
    height: 31px;
    padding: 0 9px;
    border: 1px solid #2f3d4f;
    border-radius: 3px;
    display: flex;
    align-items: center;
    font-size: 12.650px;
    color: #dfe2e6;
    white-space: nowrap;
}

.suggest.more {
    background-color: #2b3245;
    border: 0;
    width: 115px;
    gap: 5px;
    padding-left: 12px;
    margin-top: 1px;
}

.more-chevron {
    width: 10px;
    height: 10px;
}

.composer {
    flex: none;
    height: 82px;
    margin: 0 9px 10px 8px;
    background-color: #2b3245;
    border: 1px solid #3c445c;
    border-radius: 8px;
    padding: 10px 7px 0 11px;
}

.composer-hint {
    font-size: 14.500px;
    color: #9da2a6;
    line-height: 20px;
}

.composer-foot {
    margin-top: 16px;
    display: flex;
    align-items: center;
    color: #c2c8cc;
    font-size: 13.400px;
}

.clip {
    width: 13px;
    height: 17px;
    margin-right: 18px;
}

.composer-select {
    display: flex;
    align-items: center;
    gap: 6px;
}

.sel-ico {
    width: 15px;
    height: 15px;
}

.feedback {
    margin-left: auto;
    margin-right: 18px;
    color: #9da2a6;
    margin-top: -4px;
    font-size: 12.500px;
}

.send {
    width: 27px;
    height: 27px;
    border-radius: 4px;
    background-color: #3d4148;
    color: #7d8595;
    display: flex;
    align-items: center;
    justify-content: center;
}

.send svg {
    width: 16px;
    height: 16px;
}

/* preview column */
.preview-panel {
    width: 604px;
    flex: none;
    display: flex;
    flex-direction: column;
    border-radius: 4px;
    overflow: hidden;
}

.preview-tabs {
    border-bottom: 1px solid #2b3245;
}

.ptab-preview {
    width: 110px;
    padding: 0 6px;
    gap: 7px;
    font-size: 13.800px;
}

.ptab-console {
    width: 113px;
    padding: 0 8px;
    gap: 6px;
}

.ptab-secrets {
    width: 108px;
    padding: 0 8px 0 7px;
}

.tab.off {
    background-color: transparent;
    color: #a7acb4;
}

.tab-ico {
    width: 17px;
    height: 17px;
}

.dim-ico {
    color: #5c6270;
}

.browser-bar {
    height: 40px;
    flex: none;
    display: flex;
    align-items: center;
    background-color: #1c2333;
    padding: 0 10px;
    border-bottom: 1px solid #2b3245;
}

.nav-ico {
    width: 15px;
    height: 15px;
    margin-right: 16px;
    color: #dfe2e6;
}

.nav-off {
    color: #6c7280;
    margin-right: 15px;
}

.reload {
    width: 17px;
    height: 17px;
    margin-right: 9px;
    color: #f5f9fc;
}

.url {
    width: 415px;
    height: 25px;
    flex: none;
    background-color: #2b3245;
    border-radius: 4px;
    display: flex;
    align-items: center;
    padding: 0 9px 0 4px;
    font-family: 'Roboto', sans-serif;
    font-size: 13.750px;
    white-space: nowrap;
}

.url-link {
    width: 13px;
    height: 13px;
    color: #4cbf6b;
    margin-right: 2px;
}

.url-host {
    color: #4cbf6b;
    font-size: 14px;
}

.url-go {
    width: 11px;
    height: 11px;
    margin-left: auto;
    color: #7d8595;
}

.tool-ico {
    width: 17px;
    height: 17px;
    color: #8a909c;
    display: block;
}

.url + .tool-ico {
    margin-left: 9px;
}

.devtools {
    position: relative;
    margin: 0 11px;
}

.count {
    position: absolute;
    top: -7px;
    left: 2px;
    width: 21px;
    height: 16px;
    border-radius: 8px;
    background-color: #f85f5f;
    color: #1b1b1f;
    font-size: 12px;
    line-height: 16px;
    text-align: center;
}

.viewport {
    height: 822px;
    flex: none;
    display: flex;
    background-color: #09090b;
    font-family: 'Inter', sans-serif;
}

.page {
    width: 591px;
    flex: none;
    overflow: hidden;
}

.hub-head {
    height: 70px;
    display: flex;
    align-items: center;
    background-color: #121a2b;
    border-bottom: 1px solid #2e3648;
    padding: 0 0 0 18px;
}

.hub-logo {
    width: 35px;
    height: 35px;
    border-radius: 8px;
    background-color: #2196f3;
    display: flex;
    align-items: center;
    justify-content: center;
    color: #dbeafe;
}

.hub-logo svg {
    width: 19px;
    height: 19px;
}

.hub-name {
    font-size: 22px;
    font-weight: 700;
    width: 132px;
    margin-left: 9px;
    letter-spacing: -0.3px;
}

.hub-search {
    width: 210px;
    height: 44px;
    background-color: #09090b;
    border: 1px solid #26282f;
    border-radius: 6px;
    display: flex;
    align-items: center;
    gap: 14px;
    padding-left: 13px;
    font-size: 17.600px;
    color: #a1a1aa;
    white-space: nowrap;
}

.hub-search-ico {
    width: 16px;
    height: 16px;
}

.hub-globe {
    width: 19px;
    height: 19px;
    margin-left: 22px;
}

.hub-globe-chevron {
    width: 12px;
    height: 12px;
    margin-left: 3px;
    color: #a1a1aa;
}

.hub-sun {
    width: 18px;
    height: 18px;
    margin-left: 35px;
}

.hub-bell {
    width: 19px;
    height: 19px;
    margin-left: 30px;
}

.hub-body {
    padding: 0 19px 0 18px;
}

.outer-card {
    height: 728px;
    background-color: #1c2436;
    border-radius: 0 0 20px 20px;
    border: 1px solid #2e3648;
    border-top: 0;
    padding: 0 53px;
}

.inner-card {
    height: 674px;
    background-color: #09090b;
    border-radius: 0 0 8px 8px;
    padding: 0 27px;
}

.cut-input {
    height: 13px;
    border: 1px solid #26282f;
    border-top: 0;
    border-radius: 0 0 6px 6px;
    padding: 2px 0 0 25px;
}

.cut-input i {
    display: block;
    width: 3px;
    height: 2px;
    background-color: #a1a1aa;
}

.field-label {
    display: block;
    margin-top: 32px;
    font-size: 15.400px;
    font-weight: 500;
    line-height: 18px;
}

.style-select {
    margin-top: 12px;
    height: 44px;
    border: 1px solid #26282f;
    border-radius: 6px;
    display: flex;
    align-items: center;
    justify-content: space-between;
    padding: 0 15px 0 13px;
}

.style-name {
    font-size: 15.400px;
    line-height: 22px;
    padding-left: 6px;
}

.style-desc {
    font-size: 13.200px;
    line-height: 19px;
    color: #a1a1aa;
}

.style-chevron {
    width: 14px;
    height: 14px;
    color: #a1a1aa;
}

.blue-btn {
    display: inline-flex;
    height: 44px;
    padding: 0 18px;
    align-items: center;
    gap: 9px;
    background-color: #2196f3;
    border-radius: 6px;
    font-size: 15.400px;
    font-weight: 500;
    white-space: nowrap;
}

.generate {
    margin-top: 18px;
    width: 223px;
}

.blue-ico {
    width: 17px;
    height: 17px;
}

.sig-card {
    margin-top: 27px;
    height: 156px;
    padding: 18px;
    background-color: #f9fafc;
    border-radius: 8px;
}

.sig-canvas {
    height: 119px;
    background-color: #f9fafc;
    border: 1px solid #1c2436;
    border-radius: 3px;
    padding: 14px 0 0 34px;
}

.sig-ink {
    display: block;
    width: 86px;
    height: 8.600px;
    fill: none;
    stroke: #2d4066;
    stroke-width: 3;
    stroke-linecap: round;
    stroke-linejoin: round;
}

.sig-actions {
    margin-top: 18px;
    display: flex;
    gap: 9px;
}

.ghost-btn {
    height: 44px;
    width: 102px;
    border: 1px solid #26282f;
    border-radius: 6px;
    display: flex;
    align-items: center;
    gap: 8px;
    padding-left: 18px;
    font-size: 15.400px;
    font-weight: 500;
}

.preview-title {
    margin: 28px 0 0;
    font-size: 20px;
    font-weight: 600;
    line-height: 26px;
}

.preview-box {
    margin-top: 12px;
    height: 155px;
    background-color: #f9fafc;
    border-radius: 8px;
    padding: 33px 0 0 52px;
}

.scrollbar {
    width: 13px;
    flex: none;
    background-color: #f9f9f9;
    display: flex;
    flex-direction: column;
    align-items: center;
}

.arrow-up,
.arrow-down {
    width: 0;
    height: 0;
    border-left: 5px solid transparent;
    border-right: 5px solid transparent;
}

.arrow-up {
    margin-top: 5px;
    border-bottom: 6px solid #a3a3a3;
}

.arrow-down {
    margin-top: auto;
    margin-bottom: 5px;
    border-top: 6px solid #a3a3a3;
}

.thumb {
    width: 8px;
    height: 339px;
    margin-top: 207px;
    border-radius: 4px;
    background-color: #a3a3a3;
}

/* windows taskbar */
.taskbar {
    position: absolute;
    left: 0;
    right: 0;
    bottom: 0;
    height: 40px;
    display: flex;
    align-items: center;
    background-color: #222;
    font-family: 'Open Sans', sans-serif;
    color: #f2f2f2;
}

.start {
    width: 48px;
    height: 40px;
    background-color: #4b6673;
    display: flex;
    align-items: center;
    justify-content: center;
}

.tb-search {
    width: 288px;
    height: 40px;
    background-color: #383838;
    border: 1px solid #6b6b6b;
    display: flex;
    align-items: center;
    padding-left: 11px;
    font-size: 14px;
    color: #e4e4e4;
    position: relative;
}

.tb-search-ico {
    width: 18px;
    height: 18px;
    margin-right: 10px;
    stroke-width: 1.500;
}

.tb-spark {
    position: absolute;
    right: 3px;
    top: 4px;
    width: 70px;
    height: 32px;
}

.tb-app {
    width: 49px;
    height: 40px;
    display: flex;
    align-items: center;
    justify-content: center;
    position: relative;
}

.tb-view {
    width: 20px;
    height: 20px;
}

.tb-app.running::after,
.tb-app.active::after {
    content: "";
    position: absolute;
    left: 4px;
    right: 4px;
    bottom: 0;
    height: 2px;
    background-color: #a6d4f2;
}

.tb-app.active {
    background-color: #4a4a4a;
}

.tb-profile {
    position: absolute;
    right: 9px;
    bottom: 5px;
    width: 17px;
    height: 17px;
    border-radius: 50%;
    font-size: 10px;
    line-height: 17px;
    text-align: center;
    color: #fff;
}

.pink {
    background-color: #b91563;
}

.teal {
    background-color: #0d8a70;
}

.pdf {
    width: 25px;
    height: 30px;
    background-color: #e3111b;
    color: #fff;
    font-size: 8px;
    font-weight: 700;
    line-height: 10px;
    padding-top: 4px;
    text-align: center;
}

.pdf-sign {
    display: block;
    width: 18px;
    height: 9px;
    margin: 1px auto 0;
    fill: none;
    stroke: #fff;
    stroke-width: 1;
}

.tray {
    margin-left: auto;
    display: flex;
    align-items: center;
    height: 40px;
}

.sun {
    width: 20px;
    height: 20px;
    border-radius: 50%;
    background: linear-gradient(180deg, #f7b500, #e56a00);
    margin-right: 10px;
}

.weather {
    font-size: 13.500px;
    white-space: nowrap;
    width: 78px;
    margin-right: 22.500px;
}

.tray-chev {
    width: 13px;
    height: 13px;
    margin-right: 7.500px;
}

.tray-cloud {
    width: 18px;
    height: 16px;
    margin-right: 10px;
}

.tray-wifi {
    width: 16px;
    height: 15px;
    margin-right: 6px;
}

.tray-vol {
    width: 17px;
    height: 15px;
}

.lang,
.clock {
    display: flex;
    flex-direction: column;
    align-items: center;
    font-size: 12px;
    line-height: 20px;
    white-space: nowrap;
}

.lang {
    margin-left: 7px;
    width: 28px;
}

.clock {
    width: 60px;
    margin-left: 6px;
    font-size: 11px;
}

.notif {
    position: relative;
    width: 30px;
    height: 30px;
    margin: 0 16px 0 9px;
    padding: 6px 0 0 6px;
}

.notif-count {
    position: absolute;
    right: -3px;
    bottom: 0;
    width: 17px;
    height: 17px;
    border-radius: 50%;
    background-color: #333;
    border: 1px solid #999;
    font-size: 11px;
    line-height: 15px;
    text-align: center;
}

.start-tip {
    position: absolute;
    left: 8px;
    top: 964px;
    width: 34px;
    height: 20px;
    background-color: #fff;
    border: 1px solid #808080;
    color: #222;
    font-family: 'Open Sans', sans-serif;
    font-size: 11px;
    line-height: 18px;
    text-align: center;
}
```
